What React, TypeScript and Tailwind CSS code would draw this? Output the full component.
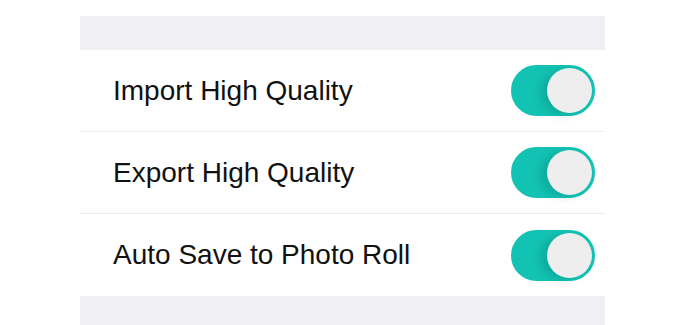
import { useState } from "react";

interface RowProps {
  label: string;
  last?: boolean;
}

function Toggle({ on, onClick }: { on: boolean; onClick: () => void }) {
  return (
    <button
      onClick={onClick}
      className={`relative w-[84px] h-[51px] rounded-full border-2 ${
        on ? "bg-[#12c3b3] border-[#12c3b3]" : "bg-white border-[#e5e5e5]"
      }`}
    >
      <span
        className={`absolute top-[1px] w-[45px] h-[45px] rounded-full bg-[#eeeeee] shadow-[-7px_2px_8px_rgba(0,80,70,0.2)] ${
          on ? "right-[1px]" : "left-[1px]"
        }`}
      />
    </button>
  );
}

function SettingRow({ label, last }: RowProps) {
  const [on, setOn] = useState(true);
  return (
    <div
      className={`flex items-center justify-between h-[82px] pl-[33px] pr-[10px] bg-white ${
        last ? "" : "border-b border-[#ebebed]"
      }`}
    >
      <span className="text-[28px] text-[#111111]">{label}</span>
      <Toggle on={on} onClick={() => setOn(!on)} />
    </div>
  );
}

export default function App() {
  return (
    <div
      className="w-[680px] h-[325px] bg-white pt-[16px]"
      style={{ fontFamily: '"Liberation Sans", Arial, sans-serif' }}
    >
      <div className="ml-[80px] w-[525px]">
        <div className="h-[34px] bg-[#efeff4]" />
        <SettingRow label="Import High Quality" />
        <SettingRow label="Export High Quality" />
        <SettingRow label="Auto Save to Photo Roll" last />
        <div className="h-[40px] bg-[#efeff4]" />
      </div>
    </div>
  );
}
